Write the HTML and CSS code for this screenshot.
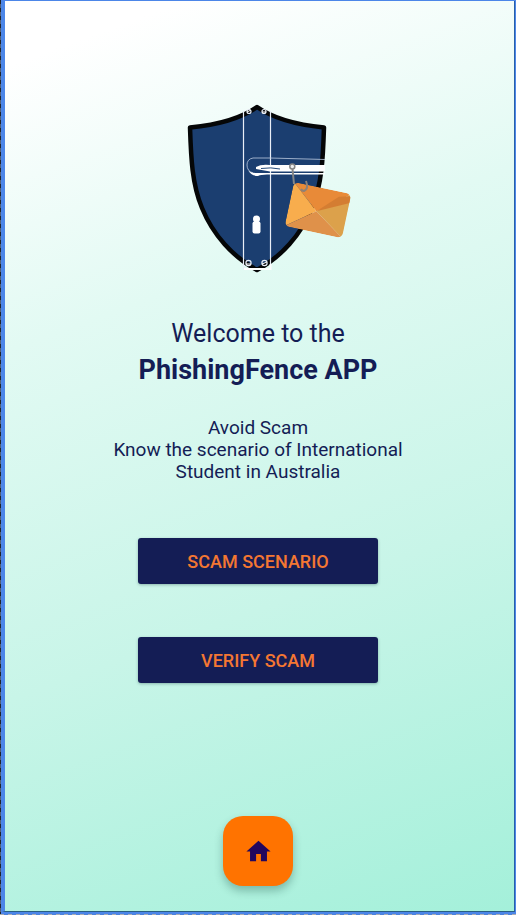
FILE: index.html
```html
<!DOCTYPE html>
<html lang="en">
<head>
<meta charset="utf-8">
<meta name="viewport" content="width=device-width, initial-scale=1">
<title>PhishingFence</title>
<link rel="stylesheet" href="styles.css">
</head>
<body>
<div class="frame">
<main class="screen">
  <svg class="logo" viewBox="158 95 200 185" role="img" aria-label="PhishingFence logo">
    <path d="M257 107 C240 119 215 125 190 127.500 C191 158 192 184 202 208 C213 235 233 257 257 270 C281 257 301 235 312 208 C322 184 323 158 324 127.500 C299 125 274 119 257 107Z" fill="#1b3e70" stroke="#050607" stroke-width="4.500" stroke-linejoin="round"/>
    <g fill="none" stroke="#e9eef7" stroke-width="1.200">
      <path d="M243.500 111V268.500H270.500V111"/>
      <circle cx="249" cy="111.500" r="2"/><circle cx="264" cy="111.500" r="2"/>
      <circle cx="248.500" cy="263" r="2.600"/><circle cx="264.500" cy="263" r="2.600"/>
    </g>
    <path d="M247 112l4-2M262 112h4M246 264h5M262 264l5-2" stroke="#fff"/>
    <path d="M244 269h26.500v-5" fill="none" stroke="#fff" stroke-width="2"/>
    <path d="M325 159.500L270 158H253Q247 159 247 165Q247 171 253 173" fill="none" stroke="#bccae0" stroke-width=".8"/>
    <path d="M256 167Q261 164 270 165H325V171.500H270L256 169Z" fill="#fff"/>
    <path d="M248 170Q250 173 256 173H325V174.500H267Q261 174.500 258 176Q251 176 248 170Z" fill="#fff"/>
    <path d="M261 168.500Q271 167 280 169" fill="none" stroke="#254979"/>
    <circle cx="256.500" cy="219" r="3.500" fill="#fff"/>
    <rect x="252.500" y="221.500" width="8" height="12" rx="2" fill="#fff"/>
    <g transform="translate(294 182) rotate(12)">
      <clipPath id="envelope"><rect width="58.500" height="45" rx="5"/></clipPath>
      <g clip-path="url(#envelope)">
        <path d="M0 0H59L28 24Z" fill="#e88a38"/>
        <path d="M0 0L28 24L0 45Z" fill="#f8ad4d"/>
        <path d="M59 0V45L28 24Z" fill="#dca14b"/>
        <path d="M0 45L28 24L59 45Z" fill="#df914a"/>
        <path d="M28 24L47 5L59 2V9Z" fill="#d47d32"/>
      </g>
    </g>
    <path d="M292.500 169L294 184" fill="none" stroke="#858585" stroke-width="2"/>
    <circle cx="292.300" cy="166.500" r="2.500" fill="#eee" stroke="#858585" stroke-width="1.500"/>
    <path d="M306 181Q309 189 304 191Q302 191 301 189" fill="none" stroke="#8d8178" stroke-width="2"/>
  </svg>
  <h1 class="title">
    <span class="greeting">Welcome to the</span>
    <strong class="app-name">PhishingFence APP</strong>
  </h1>
  <p class="intro">Avoid Scam<br>Know the scenario of International<br>Student in Australia</p>
  <div class="actions">
    <button class="action" type="button">SCAM SCENARIO</button>
    <button class="action" type="button">VERIFY SCAM</button>
  </div>
  <button class="home" type="button" aria-label="Home">
    <svg class="home-icon" viewBox="0 0 24 24" aria-hidden="true"><path d="M10 20v-6h4v6h5v-8h3L12 3 2 12h3v8z"/></svg>
  </button>
</main>
</div>
</body>
</html>
```
FILE: styles.css
```css
* {
  box-sizing: border-box;
}

body {
  margin: 0;
  font-family: Roboto, "Liberation Sans", sans-serif;
  color: #141d55;
}

.frame {
  display: flex;
  min-height: 100vh;
  padding: 1px 1px 3px 2px;
  background:
    repeating-linear-gradient(90deg, #a9adb5 0 4px, #4c82dc 4px 8px) 0 100% / 100% 1px no-repeat,
    repeating-linear-gradient(#20242b 0 4px, #526078 4px 8px) 0 0 / 1px 100% no-repeat,
    #4c86e8;
}

.screen {
  flex: 1;
  display: flex;
  flex-direction: column;
  align-items: center;
  padding: 94px 16px 25px 13px;
  border-left: 3px solid #4c86e8;
  border-right: 1px solid #285fa8;
  border-bottom: 1px solid #285f83;
  background: linear-gradient(160deg, #ffffff 6%, #e2faf3 32%, #c8f5e8 64%, #a4f0da 100%) padding-box;
}

.logo {
  width: 200px;
  height: 185px;
}

.title {
  display: flex;
  flex-direction: column;
  align-items: center;
  margin: 36px 0 0;
  line-height: 36px;
}

.greeting {
  font-size: 25px;
  font-weight: 400;
}

.app-name {
  font-size: 27px;
  font-weight: 700;
}

.intro {
  margin: 29px 0 0;
  font-size: 19px;
  line-height: 22px;
  text-align: center;
}

.actions {
  display: flex;
  flex-direction: column;
  gap: 53px;
  width: 240px;
  margin-top: 55px;
}

.action {
  height: 46px;
  padding: 0;
  border: 0;
  border-radius: 3px;
  background: #141d55;
  color: #f47732;
  font: 500 18px Roboto, "Liberation Sans", sans-serif;
  box-shadow: 0 1px 3px rgb(20 60 60 / 35%);
}

.home {
  display: grid;
  place-items: center;
  width: 70px;
  height: 70px;
  margin-top: auto;
  padding: 0;
  border: 0;
  border-radius: 20px;
  background: #ff7300;
  box-shadow: 0 5px 9px rgb(20 70 60 / 32%);
}

.home-icon {
  width: 29px;
  height: 29px;
  fill: #23075e;
}
```
